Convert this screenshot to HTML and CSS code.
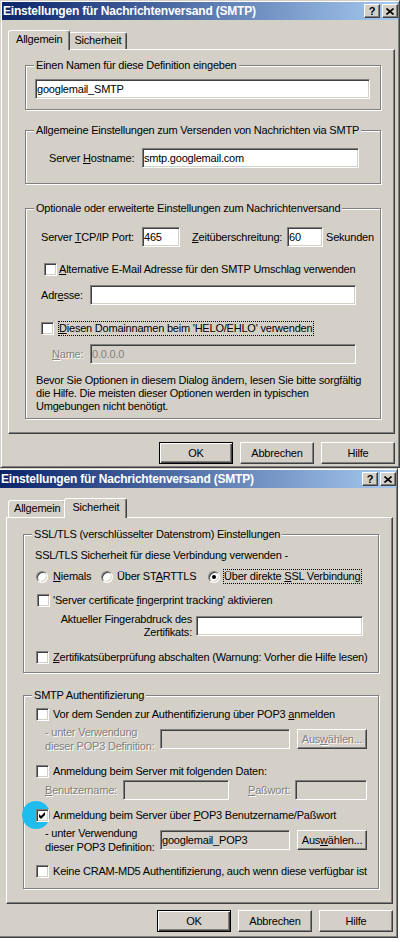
FILE: index.html
```html
<!DOCTYPE html>
<html lang="de">
<head>
  <meta charset="UTF-8" />
  <title>Einstellungen für Nachrichtenversand (SMTP)</title>
  <link rel="stylesheet" href="styles.css">
</head>
<body>

  <!-- Reiter "Allgemein" -->
  <div class="dialog">
    <div class="titlebar">
      <span class="title">Einstellungen für Nachrichtenversand (SMTP)</span>
      <span class="tbtn">?</span>
      <span class="tbtn"><svg width="8" height="7" viewBox="0 0 8 7"><path d="M0.5 0.5 L7.5 6.5 M7.5 0.5 L0.5 6.5" stroke="#000" stroke-width="1.6"/></svg></span>
    </div>

    <div class="tabs">
      <span class="tab active">Allgemein</span>
      <span class="tab">Sicherheit</span>
    </div>

    <div class="panel">
      <div class="group g-name">
        <div class="legend">Einen Namen für diese Definition eingeben</div>
        <input class="edit w-name" type="text" value="googlemail_SMTP">
      </div>

      <div class="group g-host">
        <div class="legend">Allgemeine Einstellungen zum Versenden von Nachrichten via SMTP</div>
        <div class="row r-host">
          <span class="lbl l-host">Server <u>H</u>ostname:</span>
          <input class="edit w-host" type="text" value="smtp.googlemail.com">
        </div>
      </div>

      <div class="group g-opt">
        <div class="legend">Optionale oder erweiterte Einstellungen zum Nachrichtenversand</div>
        <div class="row r-port">
          <span class="lbl l-port">Server <u>T</u>CP/IP Port:</span>
          <input class="edit w-port" type="text" value="465">
          <span class="lbl l-timeout"><u>Z</u>eitüberschreitung:</span>
          <input class="edit w-timeout" type="text" value="60">
          <span class="unit">Sekunden</span>
        </div>
        <div class="row r-check r-alt">
          <span class="check"></span>
          <span class="ctext"><u>A</u>lternative E-Mail Adresse für den SMTP Umschlag verwenden</span>
        </div>
        <div class="row r-addr">
          <span class="lbl l-addr">Adr<u>e</u>sse:</span>
          <input class="edit w-addr" type="text" value="">
        </div>
        <div class="row r-check r-helo">
          <span class="check"></span>
          <span class="focus"><u>D</u>iesen Domainnamen beim 'HELO/EHLO' verwenden</span>
        </div>
        <div class="row r-name">
          <span class="lbl l-name off"><u>N</u>ame:</span>
          <input class="edit w-addr" type="text" value="0.0.0.0" disabled>
        </div>
        <p class="note">Bevor Sie Optionen in diesem Dialog ändern, lesen Sie bitte sorgfältig<br>die Hilfe. Die meisten dieser Optionen werden in typischen<br>Umgebungen nicht benötigt.</p>
      </div>
    </div>

    <div class="buttons">
      <span class="btn default">OK</span>
      <span class="btn">Abbrechen</span>
      <span class="btn">Hilfe</span>
    </div>
  </div>

  <!-- Reiter "Sicherheit" -->
  <div class="dialog second">
    <div class="titlebar">
      <span class="title">Einstellungen für Nachrichtenversand (SMTP)</span>
      <span class="tbtn">?</span>
      <span class="tbtn"><svg width="8" height="7" viewBox="0 0 8 7"><path d="M0.5 0.5 L7.5 6.5 M7.5 0.5 L0.5 6.5" stroke="#000" stroke-width="1.6"/></svg></span>
    </div>

    <div class="tabs">
      <span class="tab">Allgemein</span>
      <span class="tab active">Sicherheit</span>
    </div>

    <div class="panel">
      <div class="group g-ssl">
        <div class="legend">SSL/TLS (verschlüsselter Datenstrom) Einstellungen</div>
        <div class="r-intro">SSL/TLS Sicherheit für diese Verbindung verwenden -</div>
        <div class="row r-radio">
          <span class="opt o-never"><span class="radio"></span><span class="otext"><u>N</u>iemals</span></span>
          <span class="opt o-start"><span class="radio"></span><span class="otext o-t2">Über ST<u>A</u>RTTLS</span></span>
          <span class="opt"><span class="radio on"></span><span class="focus o-t3">Über direkte <u>S</u>SL Verbindung</span></span>
        </div>
        <div class="row r-check r-fp">
          <span class="check"></span>
          <span class="ctext">'Server certificate <u>f</u>ingerprint tracking' aktivieren</span>
        </div>
        <div class="row r-print">
          <span class="lbl l-print">Aktueller Fingerabdruck des<br>Zertifikats:</span>
          <input class="edit w-print" type="text" value="">
        </div>
        <div class="row r-check r-nocheck">
          <span class="check"></span>
          <span class="ctext"><u>Z</u>ertifikatsüberprüfung abschalten (Warnung: Vorher die Hilfe lesen)</span>
        </div>
      </div>

      <div class="group g-auth">
        <div class="legend">SMTP Authentifizierung</div>
        <div class="row r-check r-pop">
          <span class="check"></span>
          <span class="ctext">Vor dem Senden zur Authentifizierung über POP3 <u>a</u>nmelden</span>
        </div>
        <div class="row r-def">
          <span class="lbl l-def off">- unter Verwendung<br>dieser POP3 Definition:</span>
          <input class="edit w-def" type="text" value="" disabled>
          <span class="btn small disabled">Aus<u>w</u>ählen...</span>
        </div>
        <div class="row r-check r-data">
          <span class="check"></span>
          <span class="ctext">Anmeldung beim Server mit folgenden Daten:</span>
        </div>
        <div class="row r-user">
          <span class="lbl l-user off"><u>B</u>enutzername:</span>
          <input class="edit w-user" type="text" value="" disabled>
          <span class="lbl l-pass off"><u>P</u>aßwort:</span>
          <input class="edit w-pass" type="text" value="" disabled>
        </div>
        <div class="row r-check r-popuser">
          <span class="check on"><svg width="9" height="9" viewBox="0 0 9 9"><polygon points="1,3 3,5 7,1 7,4 3,8 1,6" fill="#000"/></svg></span>
          <span class="ctext">Anmeldung beim Server über <u>P</u>OP3 Benutzername/Paßwort</span>
        </div>
        <div class="row r-def r-def2">
          <span class="lbl l-def">- unter Verwendung<br>dieser POP3 Definition:</span>
          <input class="edit w-def readonly" type="text" value="googlemail_POP3" readonly>
          <span class="btn small">Aus<u>w</u>ählen...</span>
        </div>
        <div class="row r-check r-cram">
          <span class="check"></span>
          <span class="ctext">Keine CRAM-MD5 Authentifizierung, auch wenn diese verfügbar ist</span>
        </div>
      </div>
    </div>

    <div class="buttons">
      <span class="btn default">OK</span>
      <span class="btn">Abbrechen</span>
      <span class="btn">Hilfe</span>
    </div>
  </div>

</body>
</html>
```

FILE: styles.css
```css
body {
  margin: 0;
  background: #fff;
  font-family: "Liberation Sans", Arial, sans-serif;
  font-size: 11px;
  line-height: 13px;
  letter-spacing: -0.21px;
  color: #000;
}

/* Fensterrahmen */
.dialog {
  width: 400px;
  height: 468px;
  box-sizing: border-box;
  padding: 1px;
  background: #d4d0c8;
  border: 1px solid;
  border-color: #d4d0c8 #404040 #404040 #d4d0c8;
  box-shadow: inset 1px 1px #fff, inset -1px -1px #808080;
}

.dialog.second {
  height: 470px;
  margin-left: -2px;
}

.titlebar {
  display: flex;
  align-items: center;
  height: 18px;
  padding-left: 1px;
  background: linear-gradient(to right, #0a246a, #a6caf0);
}

.title {
  flex: 1;
  color: #fff;
  font-weight: bold;
  font-size: 12px;
  letter-spacing: -0.2px;
  white-space: nowrap;
}

.tbtn {
  display: flex;
  align-items: center;
  justify-content: center;
  width: 16px;
  height: 14px;
  box-sizing: border-box;
  background: #d4d0c8;
  border: 1px solid;
  border-color: #fff #404040 #404040 #fff;
  box-shadow: inset -1px -1px #808080;
  font-weight: bold;
  font-size: 11px;
}

.tbtn + .tbtn {
  margin-left: 2px;
}

/* Reiter */
.tabs {
  display: flex;
  align-items: flex-end;
  height: 19px;
  margin: 10px 0 0 6px;
  padding-left: 2px;
}

.tab {
  height: 17px;
  box-sizing: border-box;
  padding: 0 5px;
  border: 1px solid;
  border-bottom: 0;
  border-color: #fff #404040 #404040 #fff;
  border-radius: 3px 3px 0 0;
  box-shadow: inset -1px 0 #808080;
  line-height: 15px;
}

.tab.active {
  position: relative;
  z-index: 1;
  height: 20px;
  margin: 0 -2px -1px;
  padding: 0 7px;
  background: #d4d0c8;
  line-height: 17px;
}

.panel {
  height: 385px;
  box-sizing: border-box;
  margin: 0 3px 0 6px;
  padding: 0 13px 0 16px;
  border: 1px solid;
  border-color: #fff #404040 #404040 #fff;
  box-shadow: inset -1px -1px #808080;
}

.second .panel {
  height: 387px;
}

/* Gruppenrahmen */
.group {
  padding: 0 9px;
  border: 1px solid #808080;
  box-shadow: inset 1px 1px #fff, 1px 1px #fff;
}

.legend {
  width: fit-content;
  height: 13px;
  margin: -7px 0 0 -1px;
  padding: 0 2px;
  background: #d4d0c8;
  white-space: nowrap;
}

.g-name { margin-top: 15px; padding-bottom: 10px; }
.g-host { margin-top: 20px; padding-bottom: 15px; }
.g-opt { margin-top: 24px; padding-bottom: 5px; }
.g-ssl { margin-top: 16px; padding-bottom: 8px; }
.g-auth { margin-top: 22px; padding-bottom: 10px; }

.row {
  display: flex;
  align-items: center;
  white-space: nowrap;
}

.lbl {
  flex: none;
}

.off {
  color: #808080;
  text-shadow: 1px 1px #fff;
}

/* Eingabefelder */
.edit {
  flex: none;
  box-sizing: border-box;
  height: 20px;
  margin: 0;
  padding: 0 1px;
  font: inherit;
  letter-spacing: inherit;
  color: #000;
  background: #fff;
  border: 1px solid;
  border-color: #808080 #fff #fff #808080;
  border-radius: 0;
  box-shadow: inset 1px 1px #404040, inset -1px -1px #d4d0c8;
  outline: none;
}

.edit:disabled {
  background: #d4d0c8;
  color: #808080;
}

.edit.readonly {
  background: #d4d0c8;
}

.w-name { display: block; width: 335px; margin-top: 7px; }

.r-host { margin-top: 11px; }
.l-host { width: 93px; margin-left: 14px; }
.w-host { width: 217px; }

.r-port { margin-top: 12px; }
.l-port { width: 101px; margin-left: 6px; }
.w-port { width: 38px; }
.l-timeout { width: 95px; margin-left: 12px; }
.w-timeout { width: 36px; }
.unit { margin-left: 3px; }

.r-check { height: 13px; }
.r-check .check { margin-left: 3px; }
.ctext { margin-left: 4px; }

.r-alt { margin-top: 16px; }
.r-alt .check { margin-left: 9px; }
.r-alt .ctext { margin-left: 2px; }

.r-addr { margin-top: 9px; }
.l-addr { width: 49px; margin-left: 6px; }
.w-addr { width: 266px; }

.r-helo { margin-top: 17px; }
.r-helo .check { margin-left: 6px; }
.r-helo .focus { margin-left: 4px; }

.r-name { margin-top: 9px; }
.l-name { width: 38px; margin-left: 17px; }

.note {
  margin: 10px 0 0 1px;
  white-space: nowrap;
}

/* Kontrollkaestchen und Optionsfelder */
.check {
  flex: none;
  display: flex;
  align-items: center;
  justify-content: center;
  width: 13px;
  height: 13px;
  box-sizing: border-box;
  background: #fff;
  border: 1px solid;
  border-color: #808080 #fff #fff #808080;
  box-shadow: inset 1px 1px #404040, inset -1px -1px #d4d0c8;
}

.radio {
  flex: none;
  display: flex;
  align-items: center;
  justify-content: center;
  width: 12px;
  height: 12px;
  box-sizing: border-box;
  border-radius: 50%;
  background: #fff;
  border: 1px solid;
  border-color: #808080 #fff #fff #808080;
  box-shadow: inset 1px 1px #404040, inset -1px -1px #d4d0c8;
}

.radio.on::after {
  content: "";
  width: 4px;
  height: 4px;
  border-radius: 50%;
  background: #000;
}

.focus {
  height: 15px;
  box-sizing: border-box;
  padding: 0 1px 0 0;
  border: 1px dotted #000;
}

.opt {
  display: flex;
  align-items: center;
  flex: none;
}

.otext { margin-left: 5px; }
.o-t2 { margin-left: 4px; }
.o-t3 { margin-left: 3px; }
.o-never { width: 65px; margin-left: 3px; }
.o-start { width: 107px; }

.r-intro { margin: 8px 0 0 2px; }
.r-radio { margin-top: 8px; height: 13px; }

.r-fp { margin-top: 11px; }
.r-fp .check { margin-left: 4px; }
.r-fp .ctext { margin-left: 3px; }

.r-print { margin-top: 6px; height: 26px; }
.l-print { width: 159px; text-align: right; }
.w-print { width: 167px; margin-left: 4px; }

.r-nocheck { margin-top: 12px; }

.r-pop { margin-top: 6px; }

.r-def { margin-top: 4px; height: 28px; }
.l-def { width: 115px; margin-left: 12px; line-height: 14px; }
.w-def { width: 130px; }

.r-data { margin-top: 12px; }

.r-user { margin-top: 2px; }
.l-user { width: 78px; margin-left: 12px; }
.w-user { width: 106px; }
.l-pass { width: 47px; margin-left: 19px; }
.w-pass { width: 72px; }

.r-popuser {
  position: relative;
  margin-top: 9px;
}

/* Markierung im Screenshot */
.r-popuser::before {
  content: "";
  position: absolute;
  left: -11px;
  top: -8px;
  width: 28px;
  height: 28px;
  border-radius: 50%;
  background: #1fbcee;
}

.check.on {
  position: relative;
}

.r-cram { margin-top: 11px; }

/* Schaltflaechen */
.buttons {
  display: flex;
  justify-content: flex-end;
  gap: 7px;
  margin: 8px 3px 0 0;
}

.second .buttons {
  margin-top: 6px;
}

.btn {
  display: flex;
  align-items: center;
  justify-content: center;
  width: 74px;
  height: 22px;
  box-sizing: border-box;
  background: #d4d0c8;
  border: 1px solid;
  border-color: #fff #404040 #404040 #fff;
  box-shadow: inset -1px -1px #808080;
}

.btn.default {
  border-color: #000;
  box-shadow: inset 1px 1px #fff, inset -1px -1px #404040, inset -2px -2px #808080;
}

.btn.small {
  width: 70px;
  height: 20px;
  margin-left: 7px;
}

.btn.disabled {
  color: #808080;
  text-shadow: 1px 1px #fff;
}
```
